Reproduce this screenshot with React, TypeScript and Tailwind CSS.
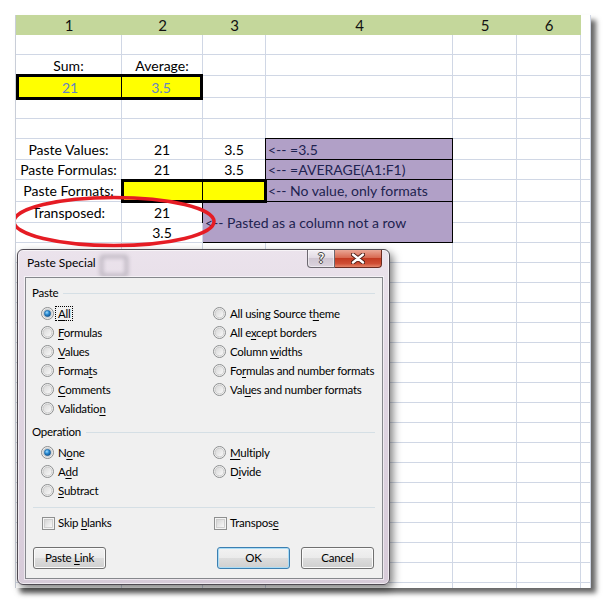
import React from "react";

const SHEET = "font-['Lato',sans-serif] text-[14px] text-black";
const UI = "font-['Lato',sans-serif] text-[11.5px] tracking-[-0.25px] text-black";

function U({ children }: { children: React.ReactNode }) {
  return <span className="underline decoration-1 underline-offset-[2px]">{children}</span>;
}

const GL = "border-r border-b border-[#d0d7e5] flex items-center justify-center whitespace-nowrap overflow-hidden";
const PURPLE =
  "-ml-px -mt-px border border-black bg-[#b1a0c7] flex items-center justify-start pl-[2px] whitespace-nowrap overflow-hidden text-[#1e2350]";

function Cell({ children, className = "" }: { children?: React.ReactNode; className?: string }) {
  return <div className={GL + " " + className}>{children}</div>;
}

function Empty({ n }: { n: number }) {
  return (
    <>
      {Array.from({ length: n }).map((_, i) => (
        <div key={i} className={GL} />
      ))}
    </>
  );
}

function Sheet() {
  const headers = ["1", "2", "3", "4", "5", "6"];
  return (
    <div className="relative ml-[15px] mt-[15px] w-[576px] h-[573px] overflow-hidden bg-white border-l border-[#c9ced8] shadow-[5px_5px_5px_rgba(0,0,0,0.6)]">
      <div
        className={
          "grid grid-cols-[106px_81px_63px_187px_64px_64px_1fr] grid-rows-[20px_20px_21px_22px_21px_20px_21px_20px_22px_21px_20px] auto-rows-[20px] " +
          SHEET
        }
      >
        {headers.map((h) => (
          <div key={h} className="bg-[#c4d79b] flex items-center justify-center text-[15px] text-[#111]">
            {h}
          </div>
        ))}
        <div className="bg-white border-r border-[#d0d7e5]" />

        {/* row 1 */}
        <Empty n={7} />
        {/* row 2 */}
        <Cell className="pt-px">Sum:</Cell>
        <Cell className="pt-px">Average:</Cell>
        <Empty n={5} />
        {/* row 3 */}
        <div className="col-span-2 -my-[2px] relative z-10 border-[3px] border-black bg-[#ffff00] flex text-[#6684c2]">
          <div className="w-[103px] border-r border-black flex items-center justify-center">21</div>
          <div className="flex-1 flex items-center justify-center">3.5</div>
        </div>
        <Empty n={5} />
        {/* row 4 */}
        <Empty n={7} />
        {/* row 5 */}
        <Empty n={7} />
        {/* row 6 */}
        <Cell>Paste Values:</Cell>
        <Cell>21</Cell>
        <Cell>3.5</Cell>
        <div className={PURPLE}>&lt;-- =3.5</div>
        <Empty n={3} />
        {/* row 7 */}
        <Cell>Paste Formulas:</Cell>
        <Cell>21</Cell>
        <Cell>3.5</Cell>
        <div className={PURPLE}>&lt;-- =AVERAGE(A1:F1)</div>
        <Empty n={3} />
        {/* row 8 */}
        <Cell>Paste Formats:</Cell>
        <div className="col-span-2 -mx-px -my-px relative z-10 border-[3px] border-black bg-[#ffff00] flex">
          <div className="w-[79px] border-r border-black" />
          <div className="flex-1" />
        </div>
        <div className={PURPLE}>&lt;-- No value, only formats</div>
        <Empty n={3} />
        {/* row 9 */}
        <Cell>Transposed:</Cell>
        <Cell>21</Cell>
        <div className={"col-span-2 row-span-2 " + PURPLE}>&lt;-- Pasted as a column not a row</div>
        <Empty n={3} />
        {/* row 10 */}
        <Cell />
        <Cell>3.5</Cell>
        <Empty n={3} />
        {/* remaining rows */}
        <Empty n={7 * 18} />
      </div>

      <svg className="absolute left-0 top-0 z-20 pointer-events-none" width="576" height="573">
        <ellipse cx="98" cy="206.5" rx="100" ry="24" fill="none" stroke="#e51c24" strokeWidth="3.5" />
      </svg>
    </div>
  );
}

function RadioIcon({ checked }: { checked?: boolean }) {
  return (
    <svg width="13" height="13" viewBox="0 0 13 13" className="shrink-0">
      <defs>
        <linearGradient id="rIn" x1="0" y1="0" x2="1" y2="1">
          <stop offset="0" stopColor="#d6d6d6" />
          <stop offset="1" stopColor="#fbfbfb" />
        </linearGradient>
        <radialGradient id="rDot" cx="0.4" cy="0.35" r="0.7">
          <stop offset="0" stopColor="#9fdcff" />
          <stop offset="0.45" stopColor="#2d8ed6" />
          <stop offset="1" stopColor="#0d4c86" />
        </radialGradient>
      </defs>
      <circle cx="6.5" cy="6.5" r="6" fill="#f2f2f2" stroke="#8c8e8f" strokeWidth="1" />
      <circle cx="6.5" cy="6.5" r="4.4" fill="url(#rIn)" stroke="#c4c4c4" strokeWidth="0.8" />
      {checked && <circle cx="6.5" cy="6.5" r="3.2" fill="url(#rDot)" stroke="#1b5a91" strokeWidth="0.5" />}
    </svg>
  );
}

function CheckIcon() {
  return (
    <svg width="13" height="13" viewBox="0 0 13 13" className="shrink-0">
      <defs>
        <linearGradient id="cIn" x1="0" y1="0" x2="1" y2="1">
          <stop offset="0" stopColor="#d3d3d3" />
          <stop offset="1" stopColor="#fbfbfb" />
        </linearGradient>
      </defs>
      <rect x="0.5" y="0.5" width="12" height="12" fill="#f4f4f4" stroke="#8e8f8f" />
      <rect x="2.5" y="2.5" width="8" height="8" fill="url(#cIn)" stroke="#c8c8c8" strokeWidth="0.8" />
    </svg>
  );
}

function Radio({ checked, children }: { checked?: boolean; children: React.ReactNode }) {
  return (
    <div className="flex items-center h-[19px]">
      <RadioIcon checked={checked} />
      <span className="ml-[4px] leading-none whitespace-nowrap">{children}</span>
    </div>
  );
}

function GroupLabel({ children }: { children: React.ReactNode }) {
  return (
    <div className="flex items-center h-[18px]">
      <span className="leading-none">{children}</span>
      <div className="flex-1 h-px bg-[#d5dfe5] ml-[5px]" />
    </div>
  );
}

function Btn({ children, def }: { children: React.ReactNode; def?: boolean }) {
  return (
    <div
      className={
        "h-[22px] w-[73px] rounded-[3px] border flex items-center justify-center bg-[linear-gradient(#f2f2f2_0%,#ebebeb_48%,#dddddd_52%,#cfcfcf_100%)] " +
        (def
          ? "border-[#3c7fb1] shadow-[inset_0_0_0_1px_#a9dcf6]"
          : "border-[#707070] shadow-[inset_0_0_0_1px_#fbfbfb]")
      }
    >
      <span className="whitespace-pre leading-none">{children}</span>
    </div>
  );
}

function Dialog() {
  return (
    <div
      className={
        "absolute left-[17px] top-[249px] w-[373px] h-[336px] rounded-[6px] border border-[#4f4a52] bg-[linear-gradient(180deg,#ebe3ec_0%,#e0d6e2_40%,#d7cbd9_100%)] shadow-[3px_4px_9px_rgba(0,0,0,0.5),inset_0_0_0_1px_rgba(255,255,255,0.6)] flex flex-col pl-[7px] pr-[6px] pb-[5px] " +
        UI
      }
    >
      <div className="absolute left-[82px] top-[5px] w-[28px] h-[22px] rounded-[3px] border-[3px] border-[#6a6470]/40 blur-[2px] pointer-events-none" />
      <div className="h-[27px] flex items-start shrink-0 relative">
        <div className="pl-[2px] pt-[7px] text-[12px] tracking-normal leading-none">Paste Special</div>
        <div className="ml-auto flex mr-[1px]">
          <div className="w-[28px] h-[18px] rounded-bl-[4px] border border-t-0 border-[#6c6870] bg-[linear-gradient(#f3eff4_0%,#e2dbe4_45%,#cfc6d2_50%,#dcd4de_100%)] flex items-center justify-center shadow-[inset_0_0_0_1px_rgba(255,255,255,0.5)]">
            <span className="text-white font-bold text-[13px] leading-none [text-shadow:0_0_1px_#333,0_0_1px_#333,1px_0_0_#555,-1px_0_0_#555,0_1px_0_#555,0_-1px_0_#555]">
              ?
            </span>
          </div>
          <div className="w-[47px] h-[18px] rounded-br-[4px] border border-t-0 border-l-0 border-[#6b2a20] bg-[linear-gradient(#eaa796_0%,#d86a52_45%,#c33b22_50%,#cf4e35_80%,#e5866b_100%)] flex items-center justify-center">
            <svg width="14" height="11" viewBox="0 0 14 11">
              <path d="M2 1.5 L12 9.5 M12 1.5 L2 9.5" stroke="#4a1b14" strokeWidth="4.2" strokeLinecap="round" />
              <path d="M2 1.5 L12 9.5 M12 1.5 L2 9.5" stroke="#ffffff" strokeWidth="2.4" strokeLinecap="round" />
            </svg>
          </div>
        </div>
      </div>
      <div className="relative flex-1 bg-[#f0f0f0] border border-[#85878c] shadow-[0_0_0_1px_rgba(255,255,255,0.55)] flex flex-col pl-[6px] pr-[7px] pt-[6px]">
        <GroupLabel>Paste</GroupLabel>
        <div className="grid grid-cols-[172px_1fr] pl-[9px] mt-[2px]">
          <div className="flex items-center h-[19px]">
            <RadioIcon checked />
            <span className="ml-[3px] px-px leading-none outline outline-1 outline-dotted outline-black outline-offset-[1px]">
              <U>A</U>ll
            </span>
          </div>
          <Radio>
            All using Source t<U>h</U>eme
          </Radio>
          <Radio>
            <U>F</U>ormulas
          </Radio>
          <Radio>
            All e<U>x</U>cept borders
          </Radio>
          <Radio>
            <U>V</U>alues
          </Radio>
          <Radio>
            Column <U>w</U>idths
          </Radio>
          <Radio>
            Forma<U>t</U>s
          </Radio>
          <Radio>
            Fo<U>r</U>mulas and number formats
          </Radio>
          <Radio>
            <U>C</U>omments
          </Radio>
          <Radio>
            Val<U>u</U>es and number formats
          </Radio>
          <Radio>
            Validatio<U>n</U>
          </Radio>
          <div />
        </div>
        <div className="mt-[5px]">
          <GroupLabel>Operation</GroupLabel>
        </div>
        <div className="grid grid-cols-[172px_1fr] pl-[9px] mt-[2px]">
          <Radio checked>
            N<U>o</U>ne
          </Radio>
          <Radio>
            <U>M</U>ultiply
          </Radio>
          <Radio>
            A<U>d</U>d
          </Radio>
          <Radio>
            D<U>i</U>vide
          </Radio>
          <Radio>
            <U>S</U>ubtract
          </Radio>
          <div />
        </div>
        <div className="h-px bg-[#d5dfe5] ml-px mt-[7px]" />
        <div className="grid grid-cols-[172px_1fr] pl-[10px] mt-[6px] h-[18px]">
          <div className="flex items-center">
            <CheckIcon />
            <span className="ml-[3px] leading-none whitespace-nowrap">
              Skip <U>b</U>lanks
            </span>
          </div>
          <div className="flex items-center">
            <CheckIcon />
            <span className="ml-[3px] leading-none whitespace-nowrap">
              Transpos<U>e</U>
            </span>
          </div>
        </div>
        <div className="flex mt-[15px] ml-px mr-px">
          <Btn>
            Paste <U>L</U>ink
          </Btn>
          <div className="ml-auto flex gap-[11px]">
            <Btn def>OK</Btn>
            <Btn>Cancel</Btn>
          </div>
        </div>
      </div>
    </div>
  );
}

export default function App() {
  return (
    <div className="relative w-[606px] h-[603px] bg-white overflow-hidden">
      <Sheet />
      <Dialog />
    </div>
  );
}
